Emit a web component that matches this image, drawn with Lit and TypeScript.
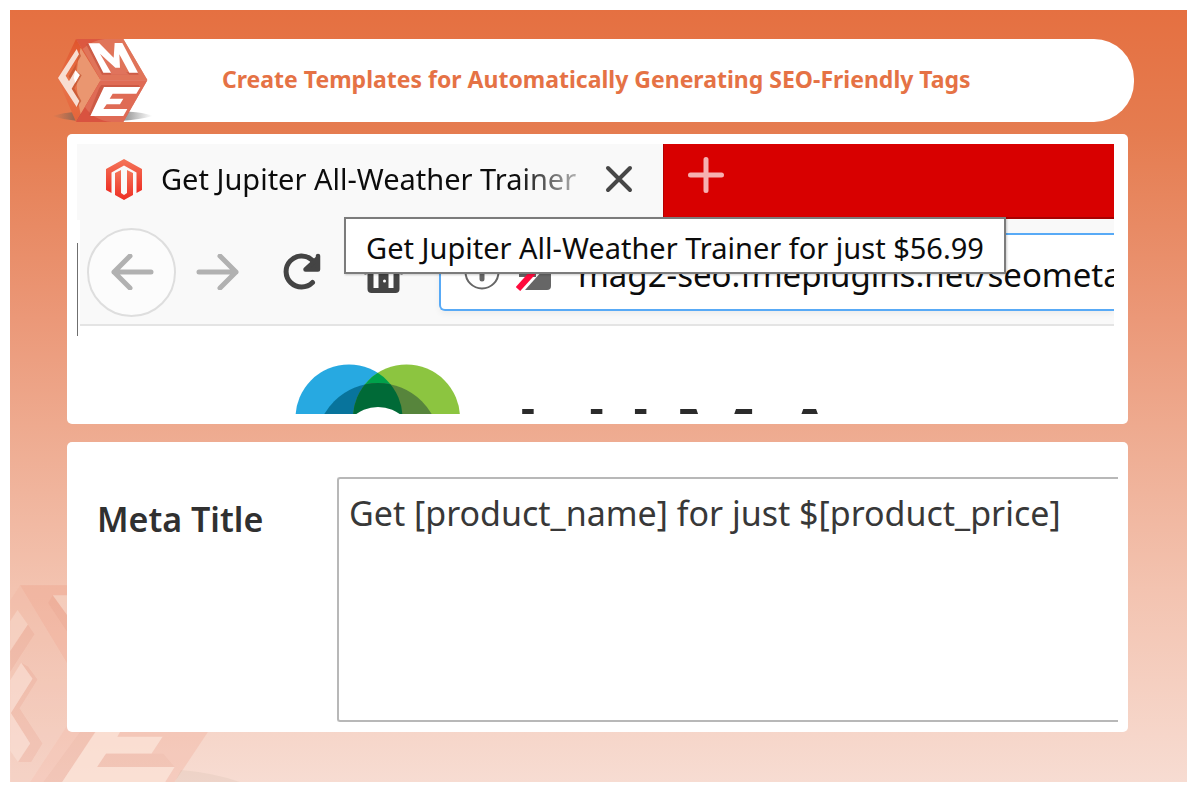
import { LitElement, html, css, svg } from "lit";
import { customElement, property } from "lit/decorators.js";

/** The FME cube, used in the banner. */
@customElement("cube-logo")
export class CubeLogo extends LitElement {
  static styles = css`
    :host { display: block; }
    svg { display: block; width: 100px; height: 83px; }
  `;
  render() {
    return html`<svg viewBox="36 42 300 249" role="img" aria-label="FME">
      <defs>
        <linearGradient id="shade" x1="0" x2="1"><stop offset="0" stop-color="#8a6a58" stop-opacity="0"/><stop offset=".25" stop-color="#6d5b51" stop-opacity=".75"/><stop offset=".75" stop-color="#777" stop-opacity=".7"/><stop offset="1" stop-color="#888" stop-opacity="0"/></linearGradient>
        <linearGradient id="left" x1="0" y1="0" x2="0" y2="1"><stop offset="0" stop-color="#e0532b"/><stop offset=".5" stop-color="#e8744a"/><stop offset="1" stop-color="#e4643a"/></linearGradient>
      </defs>
      <path d="M36 273Q70 262 108 260H270Q310 262 338 273Q300 284 250 287H108Q70 284 36 273Z" fill="url(#shade)"/>
      <path d="M108 42L182 166L108 291L52 160Z" fill="url(#left)"/>
      <path d="M122 68L182 166L122 268Q98 160 122 68Z" fill="#ea9670"/>
      <path d="M108 42H250L322 165H182Z" fill="#dc5840"/>
      <path d="M182 166H322L250 291H108Z" fill="#d95340"/>
      <path d="M128 72Q165 38 215 42H250L322 165H182Z" fill="#e27d62" opacity=".75"/>
      <path d="M182 166H322L250 291H215Q160 286 135 246Z" fill="#e0735c" opacity=".75"/>
      <path d="M138 58L146 56L190 142H292L296 149H186Z" fill="#c4523e" opacity=".7"/>
      <path d="M180 88L226 128L242 128L268 149H214Z" fill="#e0735c"/>
      <path d="M145 55H178L221 98L224 54H247L294 143H268L238 88L240 128H226L180 86L213 143H190Z" fill="#fff"/>
      <path d="M178 188L184 180H296L300 186H192L151 273L146 268Z" fill="#c4523e" opacity=".7"/>
      <path d="M192 186H301L289 206H218L209 221H250L240 238H200L190 252H262L250 273H151Z" fill="#fff"/>
      <path d="M118 80L123 93L86 154L93 168L112 140L125 151L103 190L124 228L112 246L94 192Z" fill="#c0532f" opacity=".7"/>
      <path d="M110 72L117 88L77 152L87 169L106 136L119 150L95 191L118 228L110 246L54 159Z" fill="#f8ddd1"/>
      <path d="M106 136L119 150L106 173L101 158Z" fill="#fff"/>
    </svg>`;
  }
}

const watermark = svg`
  <path d="M60 45H500L668 420L524 636H30V90Z" fill="#efa58e" opacity=".22"/>
  <path d="M60 45H500V330H232Z" fill="#eb9076" opacity=".25"/>
  <path d="M232 420H668L524 636H90Z" fill="#ee9f8c" opacity=".2"/>
  <path d="M158 75L144 98L205 190V138Z" fill="#e08a74" opacity=".22"/>
  <path d="M158 75H205V140Z" fill="#f8ddd1" opacity=".65"/>
  <path d="M83 163L103 192L30 305V240Z" fill="#de8b78" opacity=".25"/>
  <path d="M52 119L83 163L30 243V152Z" fill="#f8ddd1" opacity=".6"/>
  <path d="M63 278L84 290L112 328L58 414L127 520L93 576H54L90 520L32 429L97 326Z" fill="#de8b78" opacity=".25"/>
  <path d="M63 278L97 326L32 429L90 520L53 575L30 542V330Z" fill="#f9e0d6" opacity=".7"/>
  <path d="M240 486H284L186 636H130Z" fill="#d98c7c" opacity=".15"/>
  <path d="M318 551H490L524 591H291Z" fill="#d98c7c" opacity=".15"/>
  <path d="M286 486H360L352 500H488L455 550H318L291 591H524L496 636H186Z" fill="#fbe5db" opacity=".85"/>
  <path d="M543 600Q640 608 720 636H525Z" fill="#b9a898" opacity=".2"/>
`;

/** Text box of a template form, with its label on the left. */
@customElement("template-field")
export class TemplateField extends LitElement {
  static styles = css`
    :host { display: block; }
    .row { display: flex; align-items: flex-start; height: 245px; }
    .label {
      flex: none; width: 240px; padding-top: 18px; box-sizing: border-box;
      font: 600 34px/48px "Noto Sans", sans-serif; color: #303030;
    }
    .box {
      flex: 1; min-width: 0; height: 100%; box-sizing: border-box; margin: 0;
      padding: 10px; resize: none; outline: none; overflow: hidden;
      border: 2px solid #b8b8b8; border-right: 0; border-radius: 3px 0 0 3px;
      background: #fff; font: 400 34px/48px "Noto Sans", sans-serif; color: #383838;
    }
  `;
  @property() label = "";
  @property() value = "";
  render() {
    return html`<div class="row">
      <label class="label" for="field">${this.label}</label>
      <textarea class="box" id="field" .value=${this.value}></textarea>
    </div>`;
  }
}

/** Browser window showing the generated title in its tab and tooltip. */
@customElement("browser-preview")
export class BrowserPreview extends LitElement {
  static styles = css`
    :host { display: block; font-family: "Noto Sans", sans-serif; color: #0c0c0c; }
    .window { position: relative; height: 270px; overflow: hidden; background: #fff; }
    .tabs { display: flex; height: 76px; background: #f9f9f9; }
    .tab {
      display: flex; align-items: center; flex: none; width: 586px; height: 70px;
      padding: 0 30px 0 28px; box-sizing: border-box;
    }
    .magento { flex: none; width: 38px; height: 42px; }
    .title {
      flex: 1; min-width: 0; margin: 0 20px 0 18px; overflow: hidden; white-space: nowrap;
      font-size: 29px; line-height: 40px;
      -webkit-mask-image: linear-gradient(90deg, #000 84%, transparent 104%);
      mask-image: linear-gradient(90deg, #000 84%, transparent 104%);
    }
    button { display: block; flex: none; margin: 0; padding: 0; border: 0; background: none; }
    button svg { display: block; }
    .strip {
      flex: 1; height: 75px; box-sizing: border-box; padding: 13px 24px; background: #d80000;
      border-left: 1px solid #b40000; border-bottom: 2px solid #a80000;
    }
    .toolbar {
      display: flex; align-items: center; height: 106px; box-sizing: border-box;
      margin-left: 3px; padding-left: 7px; background: #f9f9f9; border-bottom: 2px solid #e4e4e4;
    }
    .back { width: 89px; height: 89px; box-sizing: border-box; border: 2px solid #dedede; border-radius: 50%; background: #fcfcfc; }
    .back svg { margin: 0 auto; }
    .forward { margin-left: 20px; }
    .reload { margin-left: 41px; }
    .home { margin-left: 41px; }
    .address {
      display: flex; align-items: center; flex: 1; min-width: 0; height: 78px; box-sizing: border-box;
      margin-left: 35px; padding-left: 22px; border: 2px solid #58aaf6; border-right: 0;
      border-radius: 6px 0 0 6px; background: #fff; box-shadow: 0 3px 6px #0000000d;
    }
    .address svg { flex: none; }
    .blocked { margin-left: 15px; }
    .url {
      flex: 1; min-width: 0; height: 52px; margin: 0 0 0 26px; padding: 4px 0 0; border: 0; outline: none;
      box-sizing: border-box; background: none; font: 400 33px/48px "Noto Sans", sans-serif; color: #0c0c0c;
    }
    .tooltip {
      position: absolute; left: 267px; top: 73px; padding: 7px 16px; box-sizing: border-box; height: 57px;
      min-width: 662px; text-align: center;
      border: 2px solid #7c7c7c; background: #fff; box-shadow: 1px 1px 2px #0003;
      font-size: 29px; line-height: 44px; white-space: nowrap;
    }
    .edge { position: absolute; left: 0; top: 99px; width: 1px; height: 93px; background: #6f6f6f; }
    .page { display: flex; align-items: flex-start; padding: 38px 0 0 217px; }
    .luma { display: flex; gap: 16px; margin: 22px 0 0 51px; font: 600 98px/110px "Open Sans", sans-serif; color: #2b2b2b; }
  `;
  @property() tabtitle = "";
  @property() tooltip = "";
  @property() url = "";
  render() {
    const arrow = svg`<g fill="none" stroke="#b1b1b1" stroke-width="5" stroke-linecap="round" stroke-linejoin="round"><path d="M4 18H41M20 2L4 18L20 34"/></g>`;
    return html`<div class="window">
      <div class="tabs">
        <div class="tab">
          <svg class="magento" viewBox="0 0 38 42">
            <defs><linearGradient id="m" x1="0" y1="0" x2="0" y2="1"><stop offset="0" stop-color="#f4765a"/><stop offset="1" stop-color="#ee2e24"/></linearGradient></defs>
            <path d="M19 1L37 11V32L31.500 35V14.500L19 7.500L6.500 14.500V35L1 32V11Z" fill="url(#m)"/>
            <path d="M10 15L16 12V35L19 37L22 35V12L28 15V37L19 42L10 37Z" fill="url(#m)"/>
          </svg>
          <span class="title">${this.tabtitle}</span>
          <button aria-label="Close tab"><svg width="28" height="28" viewBox="0 0 28 28"><path d="M3 3L25 25M25 3L3 25" stroke="#474747" stroke-width="4" stroke-linecap="round"/></svg></button>
        </div>
        <div class="strip">
          <button aria-label="New tab"><svg width="36" height="36" viewBox="0 0 36 36"><path d="M18 2.500V33.500M2.500 18H33.500" stroke="#f6b0b0" stroke-width="5" stroke-linecap="round"/></svg></button>
        </div>
      </div>
      <div class="toolbar">
        <button class="back" aria-label="Back"><svg width="44" height="36" viewBox="0 0 44 36">${arrow}</svg></button>
        <button class="forward" aria-label="Forward"><svg width="44" height="36" viewBox="0 0 44 36"><g transform="matrix(-1 0 0 1 44 0)">${arrow}</g></svg></button>
        <button class="reload" aria-label="Reload"><svg width="41" height="38" viewBox="0 0 41 38"><path d="M31.500 29.500A15.500 15.500 0 1 1 31 7L35 13" fill="none" stroke="#444" stroke-width="5" stroke-linecap="round"/><path d="M37 3V16.500H24.500L37 5Z" fill="#444" stroke="#444" stroke-width="4.500" stroke-linejoin="round"/></svg></button>
        <button class="home" aria-label="Home"><svg width="41" height="42" viewBox="0 0 41 42"><path d="M2.500 21.500L20.500 4L38.500 21.500" fill="none" stroke="#444" stroke-width="4" stroke-linecap="round" stroke-linejoin="round"/><path d="M4.500 19L20.500 5L36.500 19V38Q36.500 42 32.500 42H8.500Q4.500 42 4.500 38Z" fill="#444"/><path d="M10.500 20H15.500V37H10.500ZM25.500 20H30.500V37H25.500Z" fill="#fcfcfc"/><circle cx="21.500" cy="30" r="1.500" fill="#fff"/></svg></button>
        <div class="address">
          <svg width="38" height="38" viewBox="0 0 38 38"><circle cx="19" cy="19" r="16.500" fill="none" stroke="#666" stroke-width="2"/><path d="M19 17V26M19 10V11" stroke="#666" stroke-width="5" stroke-linecap="round"/></svg>
          <svg class="blocked" width="36" height="38" viewBox="0 0 36 38"><path d="M3 6H20V24H3Z" fill="#666"/><path d="M2 36L31 4" stroke="#ff0a3c" stroke-width="6"/><path d="M35 8V33Q35 37 31 37H9Z" fill="#666"/></svg>
          <input class="url" aria-label="Address" .value=${this.url} />
        </div>
      </div>
      <div class="page">
        <svg width="168" height="107" viewBox="294 363 168 107">
          <defs>
            <clipPath id="b"><circle cx="349" cy="417" r="53.500"/></clipPath>
            <clipPath id="g"><circle cx="406.500" cy="417" r="53.500"/></clipPath>
          </defs>
          <circle cx="349" cy="417" r="53.500" fill="#27a9e1"/>
          <circle cx="406.500" cy="417" r="53.500" fill="#8cc540"/>
          <g clip-path="url(#b)"><circle cx="406.500" cy="417" r="53.500" fill="#00a14b"/><circle cx="378" cy="444" r="62" fill="#08749c"/></g>
          <g clip-path="url(#g)"><circle cx="378" cy="444" r="62" fill="#57853c"/><g clip-path="url(#b)"><circle cx="378" cy="444" r="62" fill="#006a37"/></g></g>
          <circle cx="378" cy="443" r="37" fill="#fff"/>
        </svg>
        <div class="luma"><span>L</span><span>U</span><span>M</span><span>A</span></div>
      </div>
      <div class="edge"></div>
      <div class="tooltip" role="tooltip">${this.tooltip}</div>
    </div>`;
  }
}

@customElement("app-root")
export class AppRoot extends LitElement {
  static styles = css`
    :host { display: block; min-height: 100vh; padding: 10px; box-sizing: border-box; background: #fff; }
    .poster {
      position: relative; overflow: hidden; min-height: calc(100vh - 20px); box-sizing: border-box;
      padding: 29px 59px 50px 57px;
      background: linear-gradient(180deg, #e57041 0%, #e57c50 16%, #eb9878 40%, #eeaa8f 54%, #f3c3b0 75%, #f7dcd2 100%);
    }
    .watermark { position: absolute; left: 0; bottom: 0; width: 230px; height: 197px; opacity: 0.75; }
    .content { position: relative; display: flex; flex-direction: column; }
    .banner { display: flex; margin: 0 -6px 12px -15px; }
    .logo { position: relative; flex: none; }
    .pill {
      flex: 1; display: flex; align-items: center; box-sizing: border-box; height: 83px;
      margin-left: -52px; padding: 0 0 4px 122px; border-radius: 0 40px 40px 0; background: #fff;
    }
    .heading { margin: 0; font: 700 23px/34px "Noto Sans", sans-serif; color: #e57245; white-space: nowrap; }
    .card { border-radius: 5px; background: #fff; }
    .preview { padding: 10px 14px 10px 10px; margin-bottom: 18px; }
    .form { padding: 35px 10px 10px 30px; }
  `;
  render() {
    return html`<main class="poster">
      <svg class="watermark" viewBox="30 44 690 592" aria-hidden="true">${watermark}</svg>
      <div class="content">
        <header class="banner">
          <cube-logo class="logo"></cube-logo>
          <div class="pill"><h1 class="heading">Create Templates for Automatically Generating SEO-Friendly Tags</h1></div>
        </header>
        <section class="card preview">
          <browser-preview
            tabtitle="Get Jupiter All-Weather Trainer"
            tooltip="Get Jupiter All-Weather Trainer for just $56.99"
            url="mag2-seo.fmeplugins.net/seometa"
          ></browser-preview>
        </section>
        <section class="card form">
          <template-field label="Meta Title" value="Get [product_name] for just $[product_price]"></template-field>
        </section>
      </div>
    </main>`;
  }
}
